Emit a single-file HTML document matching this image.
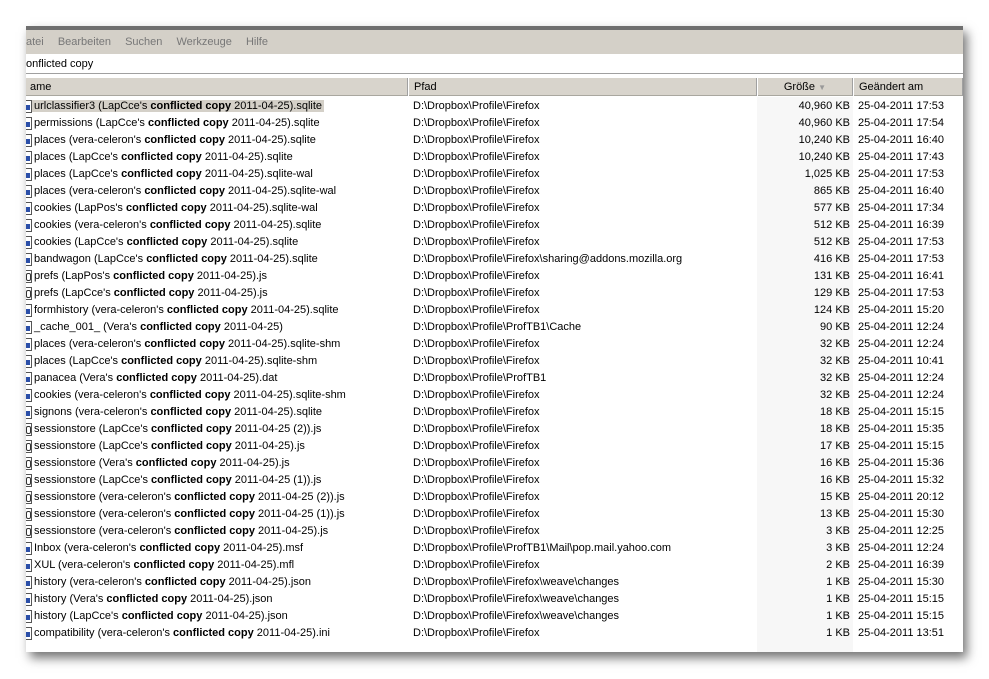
<!DOCTYPE html>
<html><head><meta charset="utf-8"><style>
*{margin:0;padding:0;box-sizing:border-box}
body{width:989px;height:679px;background:#fff;position:relative;overflow:hidden;font-family:"Liberation Sans",Tahoma,sans-serif;font-size:11px;color:#000}
#win{position:absolute;left:26px;top:26px;width:937px;height:626px;background:#fff;box-shadow:4px 6px 10px rgba(0,0,0,.55)}
#title{position:absolute;left:0;top:0;width:937px;height:4px;background:#6f6f6f}
#menu{position:absolute;left:0;top:4px;width:937px;height:24px;background:#d4d0c8;color:#777;padding-top:6px;white-space:pre;word-spacing:0}
#menu span{margin-right:11px}
#search{position:absolute;left:0;top:28px;width:937px;height:20px;background:#fff;border-top:1px solid #fff;border-bottom:1px solid #a0a0a0;padding:3px 0 0 0}
#strip{position:absolute;left:0;top:48px;width:937px;height:4px;background:#e8e6df;border-bottom:1px solid #d4d0c8}
#hdr{position:absolute;left:0;top:52px;width:937px;height:18px;background:#d8d4cc;border-bottom:1px solid #a9a79f}
.h{position:absolute;top:0;height:18px;padding:3px 0 0 5px;border-right:1px solid #a0a0a0;border-left:1px solid #fff}
#shade{position:absolute;left:731px;top:71px;width:96px;height:555px;background:#f7f7f7}
.r{position:absolute;left:0;height:17px;width:937px;white-space:nowrap}
.r div{position:absolute;top:2px}
.n{left:8px}.p{left:387px}.s{left:731px;width:93px;text-align:right}.d{left:832px}
.ic{position:absolute;left:0;top:2px;width:6px;height:13px;border:1px solid #555;border-left:none;background:#fff}
.ic:after{content:"";position:absolute;left:0;top:4px;width:4px;height:5px;background:#2b4fa8}
.js:after{background:none;border:1px solid #333;border-radius:2px;width:3px;height:6px;top:2px}
.sel{background:#d4d0c8;padding:0 2px;margin-left:-2px}
</style></head><body>
<div id="win">
<div id="title"></div>
<div id="menu"><span>atei</span> <span>Bearbeiten</span> <span>Suchen</span> <span>Werkzeuge</span> <span>Hilfe</span></div>
<div id="search">onflicted copy</div>
<div id="hdr">
<div class="h" style="left:-1px;width:383px;border-left:none">ame</div>
<div class="h" style="left:382px;width:349px">Pfad</div>
<div class="h" style="left:731px;width:96px;text-align:right;padding-right:26px">Größe <span style="color:#999;font-size:8px">▼</span></div>
<div class="h" style="left:827px;width:110px">Geändert am</div>
</div>
<div id="shade"></div>
<div id="rows"></div>
</div>
<script>
var R=[
["urlclassifier3 (LapCce's ","2011-04-25).sqlite","Firefox","40,960","17:53"],
["permissions (LapCce's ","2011-04-25).sqlite","Firefox","40,960","17:54"],
["places (vera-celeron's ","2011-04-25).sqlite","Firefox","10,240","16:40"],
["places (LapCce's ","2011-04-25).sqlite","Firefox","10,240","17:43"],
["places (LapCce's ","2011-04-25).sqlite-wal","Firefox","1,025","17:53"],
["places (vera-celeron's ","2011-04-25).sqlite-wal","Firefox","865","16:40"],
["cookies (LapPos's ","2011-04-25).sqlite-wal","Firefox","577","17:34"],
["cookies (vera-celeron's ","2011-04-25).sqlite","Firefox","512","16:39"],
["cookies (LapCce's ","2011-04-25).sqlite","Firefox","512","17:53"],
["bandwagon (LapCce's ","2011-04-25).sqlite","Firefox\\sharing@addons.mozilla.org","416","17:53"],
["prefs (LapPos's ","2011-04-25).js","Firefox","131","16:41","js"],
["prefs (LapCce's ","2011-04-25).js","Firefox","129","17:53","js"],
["formhistory (vera-celeron's ","2011-04-25).sqlite","Firefox","124","15:20"],
["_cache_001_ (Vera's ","2011-04-25)","ProfTB1\\Cache","90","12:24"],
["places (vera-celeron's ","2011-04-25).sqlite-shm","Firefox","32","12:24"],
["places (LapCce's ","2011-04-25).sqlite-shm","Firefox","32","10:41"],
["panacea (Vera's ","2011-04-25).dat","ProfTB1","32","12:24"],
["cookies (vera-celeron's ","2011-04-25).sqlite-shm","Firefox","32","12:24"],
["signons (vera-celeron's ","2011-04-25).sqlite","Firefox","18","15:15"],
["sessionstore (LapCce's ","2011-04-25 (2)).js","Firefox","18","15:35","js"],
["sessionstore (LapCce's ","2011-04-25).js","Firefox","17","15:15","js"],
["sessionstore (Vera's ","2011-04-25).js","Firefox","16","15:36","js"],
["sessionstore (LapCce's ","2011-04-25 (1)).js","Firefox","16","15:32","js"],
["sessionstore (vera-celeron's ","2011-04-25 (2)).js","Firefox","15","20:12","js"],
["sessionstore (vera-celeron's ","2011-04-25 (1)).js","Firefox","13","15:30","js"],
["sessionstore (vera-celeron's ","2011-04-25).js","Firefox","3","12:25","js"],
["Inbox (vera-celeron's ","2011-04-25).msf","ProfTB1\\Mail\\pop.mail.yahoo.com","3","12:24"],
["XUL (vera-celeron's ","2011-04-25).mfl","Firefox","2","16:39"],
["history (vera-celeron's ","2011-04-25).json","Firefox\\weave\\changes","1","15:30"],
["history (Vera's ","2011-04-25).json","Firefox\\weave\\changes","1","15:15"],
["history (LapCce's ","2011-04-25).json","Firefox\\weave\\changes","1","15:15"],
["compatibility (vera-celeron's ","2011-04-25).ini","Firefox","1","13:51"]];
var h="";R.forEach(function(r,i){var nm=r[0]+"<b>conflicted copy</b> "+r[1];if(i==0)nm='<span class="sel">'+nm+'</span>';
h+='<div class="r" style="top:'+(72+i*17)+'px"><span class="ic '+(r[5]||"")+'"></span><div class="n">'+nm+'</div><div class="p">D:\\Dropbox\\Profile\\'+r[2]+'</div><div class="s">'+r[3]+' KB</div><div class="d">25-04-2011 '+r[4]+'</div></div>';});
document.getElementById("rows").innerHTML=h;
</script>
</body></html>
